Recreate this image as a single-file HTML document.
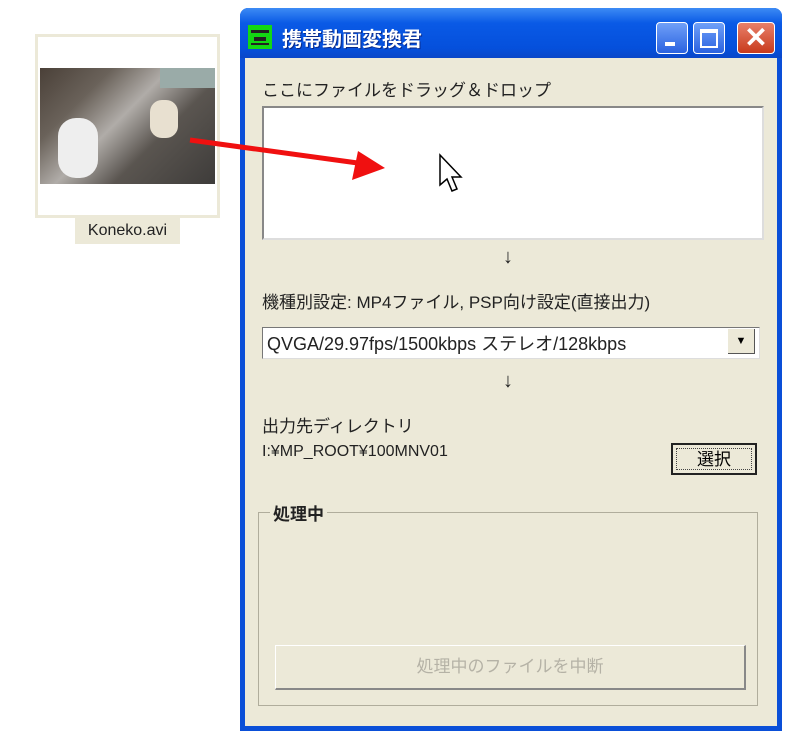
<!DOCTYPE html>
<html><head><meta charset="utf-8"><style>
body{margin:0;width:800px;height:743px;background:#fff;position:relative;overflow:hidden;font-family:"Liberation Sans","Noto Sans CJK JP",sans-serif;}
.a{position:absolute}
.t{font-size:17px;color:#222;white-space:nowrap}
</style></head><body>
<div class="a" style="left:35px;top:34px;width:179px;height:178px;background:#fff;border:3px solid #ece9d8"></div>
<div class="a" style="left:40px;top:68px;width:175px;height:116px;background:linear-gradient(135deg,#4a4038 0%,#6a625a 25%,#b0aca8 45%,#5a5550 65%,#3e3c3a 100%)"></div>
<div class="a" style="left:58px;top:118px;width:40px;height:60px;background:#eee;border-radius:18px"></div>
<div class="a" style="left:150px;top:100px;width:28px;height:38px;background:#e8e0d0;border-radius:12px"></div>
<div class="a" style="left:160px;top:68px;width:55px;height:20px;background:#9aaba8"></div>
<div class="a t" style="left:75px;top:218px;width:105px;height:26px;background:#ece9d8;font-size:16px;text-align:center;line-height:26px">Koneko.avi</div>
<div class="a" style="left:240px;top:8px;width:542px;height:723px;background:#0a4fd8;border-radius:8px 8px 0 0"></div>
<div class="a" style="left:240px;top:8px;width:542px;height:50px;border-radius:8px 8px 0 0;background:linear-gradient(#3d8bf5,#0a5ae6 30%,#0550dc 80%,#0a47c8)"></div>
<div class="a" style="left:248px;top:25px;width:24px;height:24px;background:#13d813;"><div style="position:absolute;left:3px;top:5px;width:18px;height:3px;background:#222"></div><div style="position:absolute;left:6px;top:12px;width:12px;height:4px;background:#222"></div><div style="position:absolute;left:3px;top:18px;width:18px;height:2px;background:#222"></div></div>
<div class="a" style="left:282px;top:23px;color:#fff;font-size:20px;font-weight:bold;text-shadow:1px 1px #0a2a8a">携帯動画変換君</div>
<div class="a" style="left:656px;top:22px;width:30px;height:30px;border:1px solid #fff;border-radius:4px;background:linear-gradient(#6fa0f8,#2a62e0)"><div style="position:absolute;left:8px;top:19px;width:10px;height:4px;background:#fff"></div></div>
<div class="a" style="left:693px;top:22px;width:30px;height:30px;border:1px solid #fff;border-radius:4px;background:linear-gradient(#6fa0f8,#2a62e0)"><div style="position:absolute;left:6px;top:6px;width:14px;height:13px;border:2px solid #fff;border-top-width:4px"></div></div>
<div class="a" style="left:737px;top:22px;width:36px;height:30px;border:1px solid #fff;border-radius:4px;background:linear-gradient(#e8806a,#c83a1c);color:#fff;font-size:28px;font-weight:bold;text-align:center;line-height:30px">✕</div>
<div class="a" style="left:245px;top:58px;width:532px;height:668px;background:#ece9d8"></div>
<div class="a t" style="left:262px;top:76px">ここにファイルをドラッグ＆ドロップ</div>
<div class="a" style="left:262px;top:106px;width:498px;height:130px;background:#fff;border:2px solid #888;border-right-color:#ddd;border-bottom-color:#ddd"></div>
<div class="a t" style="left:503px;top:246px;font-size:20px">↓</div>
<div class="a t" style="left:262px;top:288px">機種別設定: MP4ファイル, PSP向け設定(直接出力)</div>
<div class="a" style="left:262px;top:327px;width:496px;height:30px;background:#fff;border:1px solid #777;border-right-color:#ddd;border-bottom-color:#ddd"></div>
<div class="a t" style="left:267px;top:330px;font-size:18px">QVGA/29.97fps/1500kbps ステレオ/128kbps</div>
<div class="a" style="left:728px;top:329px;width:26px;height:24px;background:#ece9d8;border-right:1px solid #555;border-bottom:1px solid #555;font-size:11px;text-align:center;line-height:24px">▼</div>
<div class="a t" style="left:503px;top:370px;font-size:20px">↓</div>
<div class="a t" style="left:262px;top:412px">出力先ディレクトリ</div>
<div class="a t" style="left:262px;top:443px;font-size:16px">I:¥MP_ROOT¥100MNV01</div>
<div class="a" style="left:671px;top:443px;width:86px;height:32px;border:2px solid #222;background:#ece9d8;box-sizing:border-box"><div style="position:absolute;left:3px;top:3px;right:3px;bottom:3px;border:1px dotted #444;text-align:center;font-size:17px;line-height:22px">選択</div></div>
<div class="a" style="left:258px;top:512px;width:498px;height:192px;border:1px solid #b0ad9c"></div>
<div class="a t" style="left:270px;top:500px;background:#ece9d8;padding:0 3px;font-weight:bold">処理中</div>
<div class="a" style="left:275px;top:645px;width:468px;height:42px;border:1px solid #fff;border-right:2px solid #888;border-bottom:2px solid #888;background:#ece9d8;text-align:center;line-height:42px;font-size:17px;color:#b5b2a6">処理中のファイルを中断</div>
<svg class="a" style="left:0;top:0" width="800" height="743">
<line x1="190" y1="140" x2="365" y2="164" stroke="#f01010" stroke-width="5"/>
<polygon points="385,168 358,151 352,180" fill="#f01010"/>
<path d="M440 155 L440 185 L447 179 L452 191 L457 189 L452 177 L461 177 Z" fill="#fff" stroke="#000" stroke-width="1.5"/>
</svg>
</body></html>
